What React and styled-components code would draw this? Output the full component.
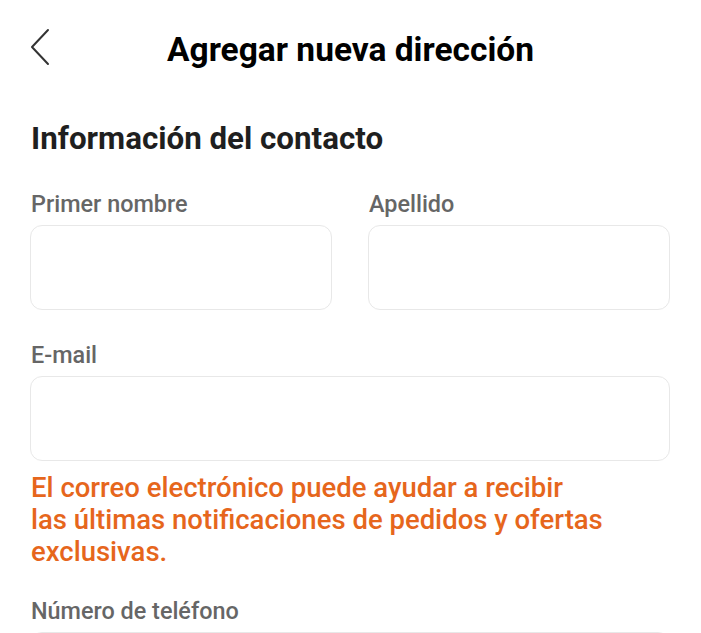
import React from 'react';
import styled, { createGlobalStyle } from 'styled-components';

const GlobalStyle = createGlobalStyle`
    body {
        margin: 0;
        background: #ffffff;
        font-family: Roboto, 'Noto Sans', sans-serif;
    }
`;

const Page = styled.div`
    width: 701px;
    height: 633px;
    overflow: hidden;
    background: #ffffff;
`;

// Header
const Header = styled.header`
    position: relative;
    padding-top: 30px;
    display: flex;
    justify-content: center;
`;

const BackButton = styled.button`
    position: absolute;
    left: 26px;
    top: 26px;
    width: 30px;
    height: 42px;
    padding: 0;
    border: 0;
    background: transparent;
    cursor: pointer;
`;

const Title = styled.h1`
    margin: 0;
    font-size: 33.5px;
    line-height: 40px;
    font-weight: 700;
    color: #000000;
`;

// Form
const Form = styled.div`
    padding: 0 31px 0 30px;
`;

const SectionTitle = styled.h2`
    margin: 51px 0 0 1px;
    font-size: 31.3px;
    line-height: 36px;
    font-weight: 700;
    color: #1f1f1f;
`;

const Row = styled.div`
    display: grid;
    grid-template-columns: 1fr 1fr;
    column-gap: 36px;
`;

const Field = styled.div`
    display: flex;
    flex-direction: column;
    margin-top: ${({ $top }) => $top || 0}px;
`;

const Label = styled.label`
    margin: 0 0 7px 1px;
    font-size: 23.4px;
    line-height: 28px;
    font-weight: 500;
    color: #666666;
`;

const Input = styled.input`
    box-sizing: border-box;
    width: 100%;
    height: 85px;
    border: 1.5px solid #e8e8e8;
    border-radius: 12px;
    background: #ffffff;
    outline: none;
    font-family: inherit;
    font-size: 22px;
    padding: 0 16px;
`;

const Hint = styled.p`
    margin: 11px 0 0 1px;
    font-size: 27.5px;
    line-height: 32px;
    font-weight: 500;
    color: #e6661c;
`;

const Back = () => (
    <BackButton aria-label="Volver">
        <svg width="30" height="42" viewBox="0 0 30 42" fill="none">
            <path d="M22 4 L6 21 L22 38" stroke="#333333" strokeWidth="2" strokeLinecap="round" strokeLinejoin="round" />
        </svg>
    </BackButton>
);

const App = () => (
    <Page>
        <GlobalStyle />
        <Header>
            <Back />
            <Title>Agregar nueva dirección</Title>
        </Header>
        <Form>
            <SectionTitle>Información del contacto</SectionTitle>
            <Row>
                <Field $top={33}>
                    <Label>Primer nombre</Label>
                    <Input />
                </Field>
                <Field $top={33}>
                    <Label>Apellido</Label>
                    <Input />
                </Field>
            </Row>
            <Field $top={31}>
                <Label>E-mail</Label>
                <Input />
            </Field>
            <Hint>
                El correo electrónico puede ayudar a recibir
                <br />
                las últimas notificaciones de pedidos y ofertas
                <br />
                exclusivas.
            </Hint>
            <Field $top={29}>
                <Label>Número de teléfono</Label>
                <Input />
            </Field>
        </Form>
    </Page>
);

export default App;
